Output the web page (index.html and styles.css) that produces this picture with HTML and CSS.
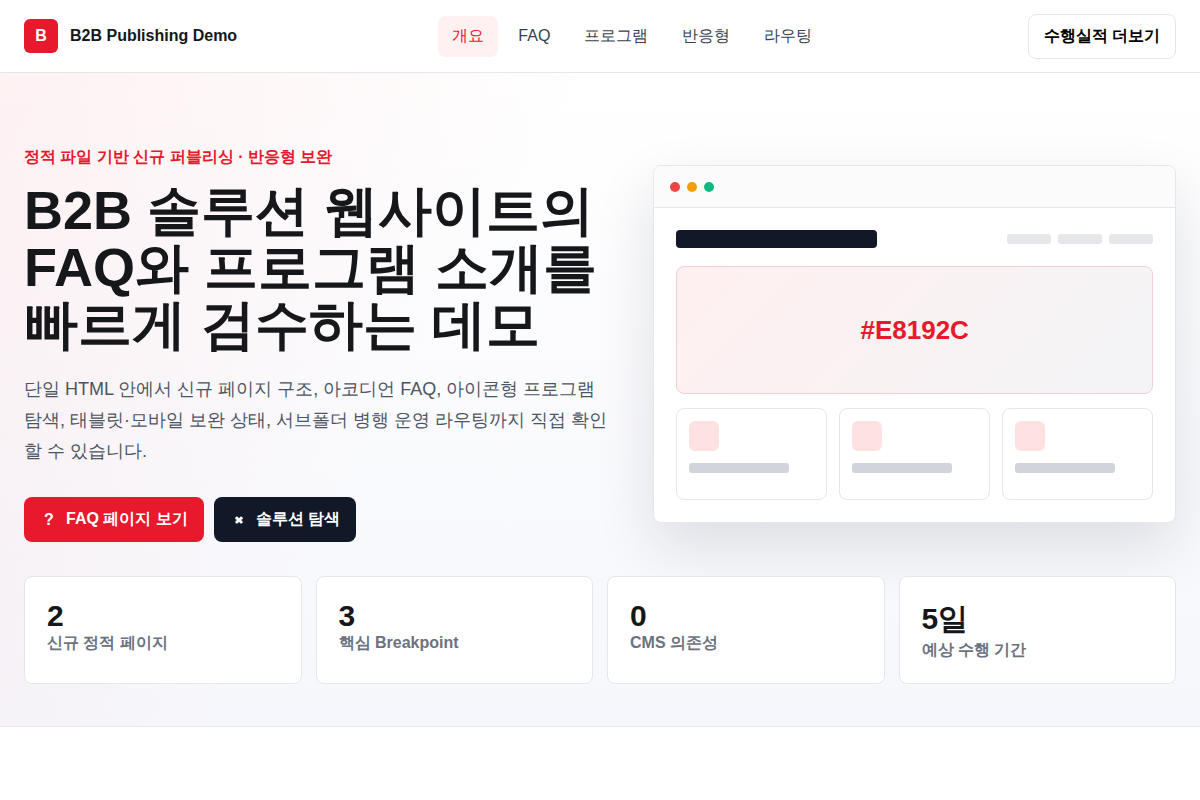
FILE: index.html
```html
<!DOCTYPE html>
<html lang="ko">
<head>
<meta charset="utf-8">
<meta name="viewport" content="width=device-width, initial-scale=1">
<title>B2B Publishing Demo</title>
<link rel="stylesheet" href="styles.css">
</head>
<body>
<header class="site-header">
  <div class="container header-inner">
    <a class="brand" href="#"><span class="brand-mark">B</span><span>B2B Publishing Demo</span></a>
    <nav class="nav">
      <a class="nav-link active" href="#overview">개요</a>
      <a class="nav-link" href="#faq">FAQ</a>
      <a class="nav-link" href="#program">프로그램</a>
      <a class="nav-link" href="#responsive">반응형</a>
      <a class="nav-link" href="#routing">라우팅</a>
    </nav>
    <button class="btn btn-outline" type="button">수행실적 더보기</button>
  </div>
</header>
<main>
  <section class="hero" id="overview">
    <div class="container">
      <div class="hero-grid">
        <div class="hero-copy">
          <p class="eyebrow">정적 파일 기반 신규 퍼블리싱 · 반응형 보완</p>
          <h1>B2B 솔루션 웹사이트의 FAQ와 프로그램 소개를 빠르게 검수하는 데모</h1>
          <p class="lead">단일 HTML 안에서 신규 페이지 구조, 아코디언 FAQ, 아이콘형 프로그램 탐색, 태블릿·모바일 보완 상태, 서브폴더 병행 운영 라우팅까지 직접 확인할 수 있습니다.</p>
          <div class="actions">
            <button class="btn btn-primary" type="button"><span class="btn-icon">?</span>FAQ 페이지 보기</button>
            <button class="btn btn-dark" type="button"><svg class="btn-icon" width="18" height="18" viewBox="0 0 18 18" aria-hidden="true"><g fill="#fff"><circle cx="6.9" cy="7.2" r="1.6"/><circle cx="11.1" cy="7.2" r="1.6"/><circle cx="6.9" cy="10.9" r="1.6"/><circle cx="11.1" cy="10.9" r="1.6"/><rect x="7" y="7.1" width="4" height="4"/></g></svg>솔루션 탐색</button>
          </div>
        </div>
        <div class="mock">
          <div class="mock-bar"><span class="dot red"></span><span class="dot amber"></span><span class="dot green"></span></div>
          <div class="mock-body">
            <div class="mock-top">
              <span class="mock-logo"></span>
              <div class="mock-menu"><span></span><span></span><span></span></div>
            </div>
            <div class="mock-banner">#E8192C</div>
            <div class="mock-cards">
              <div class="mock-card"><i></i><b></b></div>
              <div class="mock-card"><i></i><b></b></div>
              <div class="mock-card"><i></i><b></b></div>
            </div>
          </div>
        </div>
      </div>
      <div class="stats">
        <div class="stat"><strong>2</strong><span>신규 정적 페이지</span></div>
        <div class="stat"><strong>3</strong><span>핵심 Breakpoint</span></div>
        <div class="stat"><strong>0</strong><span>CMS 의존성</span></div>
        <div class="stat"><strong>5일</strong><span>예상 수행 기간</span></div>
      </div>
    </div>
  </section>
</main>
</body>
</html>
```
FILE: styles.css
```css
* { box-sizing: border-box; }
body {
  margin: 0;
  background: #fff;
  color: #15171a;
  font-family: "Liberation Sans", sans-serif;
  font-size: 16px;
}
.container { max-width: 1240px; margin: 0 auto; padding: 0 24px; }
.site-header { background: #fff; border-bottom: 1px solid #e5e7eb; }
.header-inner { display: flex; align-items: center; justify-content: space-between; min-height: 72px; }
.brand { display: flex; align-items: center; gap: 12px; color: inherit; font-weight: 700; text-decoration: none; }
.brand-mark { display: grid; place-items: center; width: 34px; height: 34px; border-radius: 6px; background: #e8192c; color: #fff; }
.nav { display: flex; align-items: center; gap: 6px; }
.nav-link { padding: 10px 14px 11px; border-radius: 8px; color: #374151; line-height: 20px; text-decoration: none; }
.nav-link.active { background: #fff0f1; color: #e8192c; }
.btn {
  display: inline-flex;
  align-items: center;
  justify-content: center;
  gap: 8px;
  min-height: 45px;
  padding: 10px 15px;
  border: 1px solid transparent;
  border-radius: 8px;
  font: inherit;
  font-weight: 700;
  cursor: pointer;
}
.btn-outline { background: #fff; border-color: #e5e7eb; color: #000; }
.btn-primary { background: #e8192c; color: #fff; }
.btn-dark { background: #111827; color: #fff; }
.btn-icon { width: 18px; text-align: center; }

.hero {
  padding: 72px 0 42px;
  border-bottom: 1px solid #e5e7eb;
  background:
    linear-gradient(120deg, rgba(232, 25, 44, 0.06), rgba(232, 25, 44, 0) 38%),
    linear-gradient(180deg, #fff, #f6f7fc);
}
.hero-grid { display: grid; grid-template-columns: minmax(0, 1.12fr) minmax(0, 1fr); gap: 44px; align-items: center; }
.eyebrow { margin: 0 0 14px; color: #e8192c; font-weight: 700; line-height: 23px; }
h1 { margin: 0 0 21px; font-size: 54px; line-height: 57px; }
.lead { margin: 0 0 30px; color: #4b5563; font-size: 18px; line-height: 31px; }
.actions { display: flex; flex-wrap: wrap; gap: 10px; }

.mock { overflow: hidden; border: 1px solid #e5e7eb; border-radius: 8px; background: #fff; box-shadow: 0 24px 60px rgba(17, 24, 39, 0.12); }
.mock-bar { display: flex; gap: 7px; padding: 16px 16px 15px; border-bottom: 1px solid #e5e7eb; background: #fbfbfc; }
.dot { width: 10px; height: 10px; border-radius: 50%; }
.red { background: #ef4444; }
.amber { background: #f59e0b; }
.green { background: #10b981; }
.mock-body { display: grid; gap: 14px; padding: 22px; }
.mock-top { display: flex; align-items: center; justify-content: space-between; margin-bottom: 4px; }
.mock-logo { width: 42%; height: 18px; border-radius: 4px; background: #111827; }
.mock-menu { display: flex; gap: 7px; }
.mock-menu span { width: 44px; height: 10px; border-radius: 3px; background: #e5e7eb; }
.mock-banner {
  display: grid;
  place-items: center;
  height: 128px;
  border: 1px solid #f3d0d6;
  border-radius: 8px;
  background: linear-gradient(135deg, #fff0f0, #f3f4f6);
  color: #e8192c;
  font-size: 26px;
  font-weight: 700;
  line-height: 32px;
}
.mock-cards { display: grid; grid-template-columns: repeat(3, 1fr); gap: 12px; }
.mock-card { height: 92px; padding: 12px; border: 1px solid #e5e7eb; border-radius: 8px; }
.mock-card i { display: block; width: 30px; height: 30px; margin-bottom: 12px; border-radius: 6px; background: #fee2e2; }
.mock-card b { display: block; width: 80%; height: 10px; border-radius: 3px; background: #d1d5db; }

.stats { display: grid; grid-template-columns: repeat(4, 1fr); gap: 14px; margin-top: 34px; }
.stat { padding: 22px; border: 1px solid #e5e7eb; border-radius: 8px; background: #fff; }
.stat strong { display: block; font-size: 30px; }
.stat span { display: block; color: #6b7280; font-weight: 700; }

@media (max-width: 900px) {
  .header-inner { flex-wrap: wrap; gap: 12px; padding-top: 12px; padding-bottom: 12px; }
  .nav { flex-wrap: wrap; }
  .hero-grid { grid-template-columns: minmax(0, 1fr); }
  .stats { grid-template-columns: repeat(2, 1fr); }
  h1 { font-size: 40px; line-height: 46px; }
}
```
